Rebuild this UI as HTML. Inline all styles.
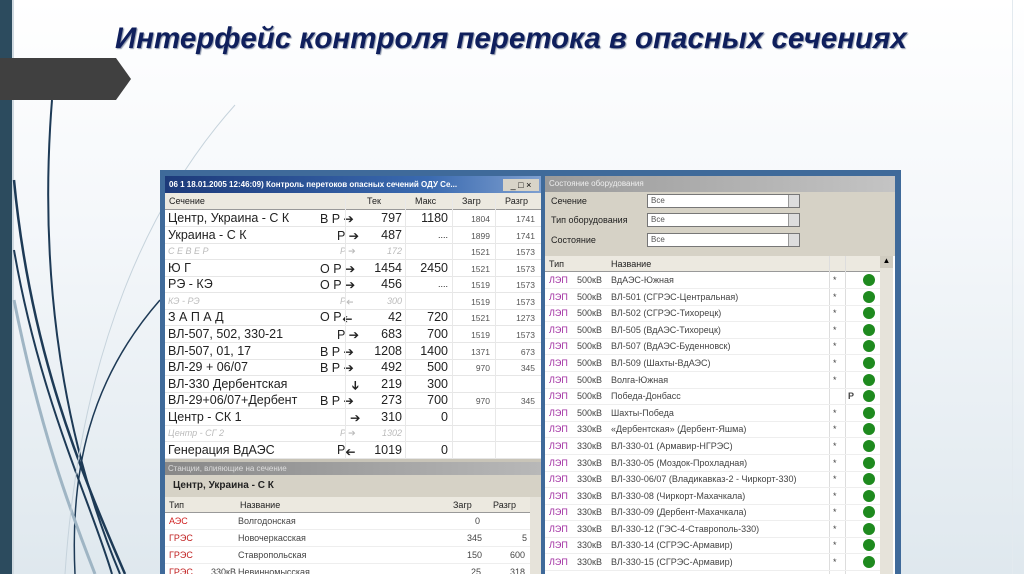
<!DOCTYPE html>
<html><head><meta charset="utf-8">
<style>
*{margin:0;padding:0;box-sizing:border-box}
html,body{overflow:hidden}
body{width:1024px;height:574px;position:relative;font-family:"Liberation Sans","DejaVu Sans",sans-serif;background:linear-gradient(180deg,#ffffff 0%,#f4f7fa 40%,#dfe8ee 100%)}
.a{position:absolute}
.title{left:115px;top:22px;font-size:29.5px;font-weight:bold;font-style:italic;color:#0f1f5c;white-space:nowrap;text-shadow:1px 1px 1px #8a94a8}
.win{left:160px;top:170px;width:741px;height:404px;background:#3f6a9a}
.lp{left:165px;top:176px;width:376px;height:398px;background:#fff}
.tb{left:165px;top:176px;width:376px;height:17px;background:linear-gradient(90deg,#1d3a7a,#3a6ab0 70%,#7fa0d0);color:#fff;font-size:8px;font-weight:bold;line-height:17px;padding-left:4px;white-space:nowrap;overflow:hidden}
.hd{background:#ece9e0;font-size:9px;color:#222;border-bottom:1px solid #999}
.r{position:absolute;left:165px;width:376px;height:16.5px;border-bottom:1px solid #e6e6e6;font-size:12.5px;color:#222;white-space:nowrap}
.r span{position:absolute;top:1px}
.r .t{right:139px}.r .m{right:93px}.r .z{right:51px;top:4px;font-size:8.5px;color:#555}.r .p{right:6px;top:4px;font-size:8.5px;color:#555}
.g{color:#bbb!important;font-style:italic;font-size:9px!important;top:3px!important}
.lf{display:inline-block;transform:scaleX(-1)}
.dn{display:inline-block;transform:rotate(90deg)}
.rp{left:545px;top:176px;width:350px;height:398px;background:#fff}
.rr{position:absolute;left:545px;width:335px;height:16.6px;border-bottom:1px solid #eee;font-size:9px;color:#444;white-space:nowrap}
.rr span{position:absolute;top:3px}
.dot{width:12px;height:12px;border-radius:50%;background:#1e8a1e;top:2px!important}
.sel{position:absolute;left:647px;width:153px;height:14px;background:#fff;border:1px solid #777;font-size:8px;color:#555;padding-left:3px;line-height:12px}
.sel:after{content:"";position:absolute;right:0;top:0;width:10px;height:12px;background:#ddd;border-left:1px solid #999}
</style></head><body>
<div class="a" style="left:0;top:0;width:12px;height:574px;background:#2c4b5e"></div>
<div class="a" style="left:12px;top:0;width:2px;height:574px;background:#cfd9e0"></div>
<svg class="a" style="left:0;top:0" width="260" height="574">
<polygon points="0,58 116,58 131,79 116,100 0,100" fill="#404040"/>
<path d="M52,100 C40,250 55,420 120,574" stroke="#1d3a56" stroke-width="2" fill="none"/>
<path d="M14,180 C30,350 80,470 125,574" stroke="#1d3a56" stroke-width="2.5" fill="none"/>
<path d="M14,250 C40,400 90,500 112,574" stroke="#1d3a56" stroke-width="2" fill="none"/>
<path d="M160,300 C90,380 70,470 75,574" stroke="#1d3a56" stroke-width="1.5" fill="none"/>
<path d="M14,300 C40,430 70,510 95,574" stroke="#9fb5c4" stroke-width="3" fill="none"/>
<path d="M235,105 C150,200 80,350 65,574" stroke="#c6d3dc" stroke-width="1" fill="none"/>
</svg>
<div class="a" style="left:1012px;top:0;width:1px;height:574px;background:#e3eaef"></div>
<div class="a title">Интерфейс контроля перетока в опасных сечениях</div>

<div class="a win"></div>
<div class="a lp"></div>
<div class="a tb">06 1 18.01.2005 12:46:09) Контроль перетоков опасных сечений ОДУ Се...</div>
<div class="a" style="left:503px;top:179px;width:36px;height:12px;background:#d8d4c8;font-size:9px;line-height:12px;color:#000;text-align:center">_ □ ×</div>
<div class="a hd" style="left:165px;top:193px;width:376px;height:17px">
<span class="a" style="left:4px;top:3px">Сечение</span><span class="a" style="left:202px;top:3px">Тек</span><span class="a" style="left:250px;top:3px">Макс</span><span class="a" style="left:297px;top:3px">Загр</span><span class="a" style="left:340px;top:3px">Разгр</span></div>

<div class="r" style="top:210px"><span style="left:3px">Центр, Украина - С К</span><span style="left:155px">B P ➔</span><span class="t">797</span><span class="m">1180</span><span class="z">1804</span><span class="p">1741</span></div>
<div class="r" style="top:227px"><span style="left:3px">Украина - С К</span><span style="left:172px">P ➔</span><span class="t">487</span><span class="m" style="font-size:9px;top:3px">....</span><span class="z">1899</span><span class="p">1741</span></div>
<div class="r" style="top:243px"><span class="g" style="left:3px">С Е В Е Р</span><span class="g" style="left:175px">P ➔</span><span class="t g">172</span><span class="z">1521</span><span class="p">1573</span></div>
<div class="r" style="top:260px"><span style="left:3px">Ю Г</span><span style="left:155px">O P ➔</span><span class="t">1454</span><span class="m">2450</span><span class="z">1521</span><span class="p">1573</span></div>
<div class="r" style="top:276px"><span style="left:3px">РЭ - КЭ</span><span style="left:155px">O P ➔</span><span class="t">456</span><span class="m" style="font-size:9px;top:3px">....</span><span class="z">1519</span><span class="p">1573</span></div>
<div class="r" style="top:293px"><span class="g" style="left:3px">КЭ - РЭ</span><span class="g" style="left:175px">P <span class="lf">➔</span></span><span class="t g">300</span><span class="z">1519</span><span class="p">1573</span></div>
<div class="r" style="top:309px"><span style="left:3px">З А П А Д</span><span style="left:155px">O P <span class="lf">➔</span></span><span class="t">42</span><span class="m">720</span><span class="z">1521</span><span class="p">1273</span></div>
<div class="r" style="top:326px"><span style="left:3px">ВЛ-507, 502, 330-21</span><span style="left:172px">P ➔</span><span class="t">683</span><span class="m">700</span><span class="z">1519</span><span class="p">1573</span></div>
<div class="r" style="top:343px"><span style="left:3px">ВЛ-507, 01, 17</span><span style="left:155px">B P ➔</span><span class="t">1208</span><span class="m">1400</span><span class="z">1371</span><span class="p">673</span></div>
<div class="r" style="top:359px"><span style="left:3px">ВЛ-29 + 06/07</span><span style="left:155px">B P ➔</span><span class="t">492</span><span class="m">500</span><span class="z">970</span><span class="p">345</span></div>
<div class="r" style="top:376px"><span style="left:3px">ВЛ-330 Дербентская</span><span style="left:186px"><span class="dn">➔</span></span><span class="t">219</span><span class="m">300</span></div>
<div class="r" style="top:392px"><span style="left:3px">ВЛ-29+06/07+Дербент</span><span style="left:155px">B P ➔</span><span class="t">273</span><span class="m">700</span><span class="z">970</span><span class="p">345</span></div>
<div class="r" style="top:409px"><span style="left:3px">Центр - СК 1</span><span style="left:185px">➔</span><span class="t">310</span><span class="m">0</span></div>
<div class="r" style="top:425px"><span class="g" style="left:3px">Центр - СГ 2</span><span class="g" style="left:175px">P ➔</span><span class="t g">1302</span></div>
<div class="r" style="top:442px"><span style="left:3px">Генерация ВдАЭС</span><span style="left:172px">P <span class="lf">➔</span></span><span class="t">1019</span><span class="m">0</span></div>
<div class="a" style="left:345px;top:193px;width:1px;height:266px;background:#e8e8e8"></div>
<div class="a" style="left:405px;top:193px;width:1px;height:266px;background:#e8e8e8"></div>
<div class="a" style="left:452px;top:193px;width:1px;height:266px;background:#e8e8e8"></div>
<div class="a" style="left:495px;top:193px;width:1px;height:266px;background:#e8e8e8"></div>

<div class="a" style="left:165px;top:459px;width:376px;height:3px;background:#c8c4b8"></div>
<div class="a" style="left:165px;top:462px;width:376px;height:13px;background:linear-gradient(90deg,#888,#b8b8b8);font-size:8px;color:#ddd;padding-left:3px;line-height:13px">Станции, влияющие на сечение</div>
<div class="a" style="left:165px;top:475px;width:376px;height:22px;background:#d6d2c6;font-size:10px;font-weight:bold;color:#222;padding:5px 0 0 8px">Центр, Украина - С К</div>
<div class="a hd" style="left:165px;top:497px;width:365px;height:16px"><span class="a" style="left:4px;top:3px">Тип</span><span class="a" style="left:75px;top:3px">Название</span><span class="a" style="left:288px;top:3px">Загр</span><span class="a" style="left:328px;top:3px">Разгр</span></div>
<div class="a" style="left:530px;top:497px;width:11px;height:77px;background:#e6e3da"></div>
<div class="rr" style="left:165px;width:365px;top:513px"><span style="left:4px;color:#d02020">АЭС</span><span style="left:73px">Волгодонская</span><span style="left:310px">0</span></div>
<div class="rr" style="left:165px;width:365px;top:530px"><span style="left:4px;color:#c02020">ГРЭС</span><span style="left:73px">Новочеркасская</span><span style="left:302px">345</span><span style="left:357px">5</span></div>
<div class="rr" style="left:165px;width:365px;top:547px"><span style="left:4px;color:#c02020">ГРЭС</span><span style="left:73px">Ставропольская</span><span style="left:302px">150</span><span style="left:345px">600</span></div>
<div class="rr" style="left:165px;width:365px;top:564px"><span style="left:4px;color:#c02020">ГРЭС</span><span style="left:46px">330кВ</span><span style="left:73px">Невинномысская</span><span style="left:306px">25</span><span style="left:345px">318</span></div>

<div class="a rp"></div>
<div class="a" style="left:545px;top:176px;width:350px;height:16px;background:linear-gradient(90deg,#9a9a9a,#c4c4c4);font-size:8px;color:#eee;padding-left:4px;line-height:16px">Состояние оборудования</div>
<div class="a" style="left:545px;top:192px;width:350px;height:64px;background:#d6d2c6"></div>
<div class="a" style="left:551px;top:196px;font-size:9px;color:#222">Сечение</div>
<div class="a" style="left:551px;top:215px;font-size:9px;color:#222">Тип оборудования</div>
<div class="a" style="left:551px;top:235px;font-size:9px;color:#222">Состояние</div>
<div class="sel" style="top:194px">Все</div>
<div class="sel" style="top:213px">Все</div>
<div class="sel" style="top:233px">Все</div>
<div class="a hd" style="left:545px;top:256px;width:335px;height:16px"><span class="a" style="left:4px;top:3px">Тип</span><span class="a" style="left:66px;top:3px">Название</span></div>
<div class="a" style="left:829px;top:256px;width:1px;height:318px;background:#ddd"></div>
<div class="a" style="left:845px;top:256px;width:1px;height:318px;background:#ddd"></div>
<div class="a" style="left:880px;top:256px;width:13px;height:318px;background:#e6e3da"></div>
<div class="a" style="left:880px;top:256px;width:13px;height:12px;background:#d0ccc0;font-size:8px;text-align:center">▲</div>

<div class="rr" style="top:272px"><span style="left:4px;color:#a02ca0">ЛЭП</span><span style="left:32px">500кВ</span><span style="left:66px">ВдАЭС-Южная</span><span style="left:288px">*</span><span class="dot" style="left:318px"></span></div>
<div class="rr" style="top:289px"><span style="left:4px;color:#a02ca0">ЛЭП</span><span style="left:32px">500кВ</span><span style="left:66px">ВЛ-501 (СГРЭС-Центральная)</span><span style="left:288px">*</span><span class="dot" style="left:318px"></span></div>
<div class="rr" style="top:305px"><span style="left:4px;color:#a02ca0">ЛЭП</span><span style="left:32px">500кВ</span><span style="left:66px">ВЛ-502 (СГРЭС-Тихорецк)</span><span style="left:288px">*</span><span class="dot" style="left:318px"></span></div>
<div class="rr" style="top:322px"><span style="left:4px;color:#a02ca0">ЛЭП</span><span style="left:32px">500кВ</span><span style="left:66px">ВЛ-505 (ВдАЭС-Тихорецк)</span><span style="left:288px">*</span><span class="dot" style="left:318px"></span></div>
<div class="rr" style="top:338px"><span style="left:4px;color:#a02ca0">ЛЭП</span><span style="left:32px">500кВ</span><span style="left:66px">ВЛ-507 (ВдАЭС-Буденновск)</span><span style="left:288px">*</span><span class="dot" style="left:318px"></span></div>
<div class="rr" style="top:355px"><span style="left:4px;color:#a02ca0">ЛЭП</span><span style="left:32px">500кВ</span><span style="left:66px">ВЛ-509 (Шахты-ВдАЭС)</span><span style="left:288px">*</span><span class="dot" style="left:318px"></span></div>
<div class="rr" style="top:372px"><span style="left:4px;color:#a02ca0">ЛЭП</span><span style="left:32px">500кВ</span><span style="left:66px">Волга-Южная</span><span style="left:288px">*</span><span class="dot" style="left:318px"></span></div>
<div class="rr" style="top:388px"><span style="left:4px;color:#a02ca0">ЛЭП</span><span style="left:32px">500кВ</span><span style="left:66px">Победа-Донбасс</span><span style="left:303px;font-weight:bold">P</span><span class="dot" style="left:318px"></span></div>
<div class="rr" style="top:405px"><span style="left:4px;color:#a02ca0">ЛЭП</span><span style="left:32px">500кВ</span><span style="left:66px">Шахты-Победа</span><span style="left:288px">*</span><span class="dot" style="left:318px"></span></div>
<div class="rr" style="top:421px"><span style="left:4px;color:#a02ca0">ЛЭП</span><span style="left:32px">330кВ</span><span style="left:66px">«Дербентская» (Дербент-Яшма)</span><span style="left:288px">*</span><span class="dot" style="left:318px"></span></div>
<div class="rr" style="top:438px"><span style="left:4px;color:#a02ca0">ЛЭП</span><span style="left:32px">330кВ</span><span style="left:66px">ВЛ-330-01 (Армавир-НГРЭС)</span><span style="left:288px">*</span><span class="dot" style="left:318px"></span></div>
<div class="rr" style="top:455px"><span style="left:4px;color:#a02ca0">ЛЭП</span><span style="left:32px">330кВ</span><span style="left:66px">ВЛ-330-05 (Моздок-Прохладная)</span><span style="left:288px">*</span><span class="dot" style="left:318px"></span></div>
<div class="rr" style="top:471px"><span style="left:4px;color:#a02ca0">ЛЭП</span><span style="left:32px">330кВ</span><span style="left:66px">ВЛ-330-06/07 (Владикавказ-2 - Чиркорт-330)</span><span style="left:288px">*</span><span class="dot" style="left:318px"></span></div>
<div class="rr" style="top:488px"><span style="left:4px;color:#a02ca0">ЛЭП</span><span style="left:32px">330кВ</span><span style="left:66px">ВЛ-330-08 (Чиркорт-Махачкала)</span><span style="left:288px">*</span><span class="dot" style="left:318px"></span></div>
<div class="rr" style="top:504px"><span style="left:4px;color:#a02ca0">ЛЭП</span><span style="left:32px">330кВ</span><span style="left:66px">ВЛ-330-09 (Дербент-Махачкала)</span><span style="left:288px">*</span><span class="dot" style="left:318px"></span></div>
<div class="rr" style="top:521px"><span style="left:4px;color:#a02ca0">ЛЭП</span><span style="left:32px">330кВ</span><span style="left:66px">ВЛ-330-12 (ГЭС-4-Ставрополь-330)</span><span style="left:288px">*</span><span class="dot" style="left:318px"></span></div>
<div class="rr" style="top:537px"><span style="left:4px;color:#a02ca0">ЛЭП</span><span style="left:32px">330кВ</span><span style="left:66px">ВЛ-330-14 (СГРЭС-Армавир)</span><span style="left:288px">*</span><span class="dot" style="left:318px"></span></div>
<div class="rr" style="top:554px"><span style="left:4px;color:#a02ca0">ЛЭП</span><span style="left:32px">330кВ</span><span style="left:66px">ВЛ-330-15 (СГРЭС-Армавир)</span><span style="left:288px">*</span><span class="dot" style="left:318px"></span></div>
</body></html>
